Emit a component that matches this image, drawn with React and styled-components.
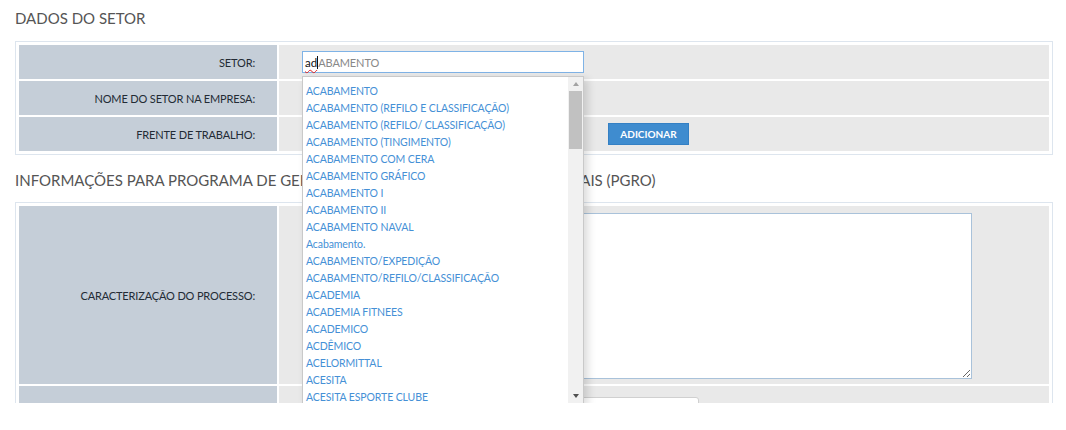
import React from "react";
import styled, { createGlobalStyle } from "styled-components";

const GlobalStyle = createGlobalStyle`
  html, body {
    margin: 0;
    padding: 0;
    background: #fff;
    font-family: "Lato", "Liberation Sans", sans-serif;
  }
  * { box-sizing: border-box; }
`;

const Viewport = styled.div`
  height: 403px;
  overflow: hidden;
  padding: 0 13px 0 15px;
`;

const Heading = styled.h2`
  margin: ${(p) => (p.$first ? "0 0 13px" : "15px 0 12px")};
  padding-top: ${(p) => (p.$first ? "8px" : "0")};
  font-size: 15px;
  line-height: 20px;
  font-weight: 400;
  color: #555;
  text-transform: uppercase;
  white-space: nowrap;
`;

const Panel = styled.div`
  width: 1038px;
  border: 1px solid #dde5ee;
  padding: 3px;
  display: grid;
  grid-template-columns: 258px 1fr;
  gap: 2px;
`;

const Label = styled.div`
  background: #c5ced8;
  min-height: ${(p) => p.$h || 34}px;
  display: flex;
  align-items: center;
  justify-content: flex-end;
  padding-right: 22px;
  font-size: 11px;
  letter-spacing: -0.15px;
  color: #232b35;
  text-transform: uppercase;
`;

const Value = styled.div`
  background: #e9e9e9;
  min-height: ${(p) => p.$h || 34}px;
  display: flex;
  align-items: ${(p) => (p.$top ? "flex-start" : "center")};
  padding: ${(p) => (p.$top ? "7px 0 5px 23px" : "0 0 0 23px")};
`;

const Field = styled.div`
  position: relative;
`;

const Input = styled.div`
  width: ${(p) => p.$w || 282}px;
  height: ${(p) => p.$h || 22}px;
  margin-top: ${(p) => p.$mt || 0}px;
  background: #fff;
  border: 1px solid ${(p) => (p.$focus ? "#7fb3e6" : "#d0d0d0")};
  border-radius: ${(p) => (p.$round ? "3px" : "0")};
  display: flex;
  align-items: center;
  padding-left: 2px;
  font-size: 11px;
`;

const Typed = styled.span`
  color: #111;
  font-size: 11.5px;
  text-decoration: underline wavy #e02020;
  text-underline-offset: 2px;
  text-decoration-thickness: 1px;
  border-right: 1px solid #111;
`;

const Ghost = styled.span`
  color: #888;
  letter-spacing: -0.1px;
`;

const Spacer = styled.div`
  width: ${(p) => p.$w}px;
  flex: none;
`;

const Button = styled.button`
  height: 22px;
  width: 81px;
  border: 1px solid #3480c4;
  background: #3f8ccf;
  color: #fff;
  font-family: inherit;
  font-size: 10px;
  font-weight: 700;
  text-transform: uppercase;
  padding: 0;
`;

const Textarea = styled.textarea`
  width: 670px;
  height: 166px;
  border: 1px solid #a9c2da;
  background: #fff;
  resize: both;
  font-family: inherit;
`;

const Dropdown = styled.div`
  position: absolute;
  top: calc(100% + 3px);
  left: 0;
  width: 282px;
  height: 328px;
  background: #fff;
  border: 1px solid #c9c9c9;
  box-shadow: 4px 3px 8px rgba(0, 0, 0, 0.14);
  display: flex;
  z-index: 10;
`;

const List = styled.ul`
  flex: 1;
  margin: 0;
  padding: 6px 0 0 3px;
  list-style: none;
  overflow: hidden;
`;

const Item = styled.li`
  font-size: 10.5px;
  letter-spacing: -0.1px;
  line-height: 17px;
  height: 17px;
  color: #4590d6;
  white-space: nowrap;
`;

const Scrollbar = styled.div`
  width: 15px;
  background: #f1f1f1;
  display: flex;
  flex-direction: column;
  align-items: center;
`;

const Arrow = styled.div`
  height: 14px;
  width: 15px;
  display: flex;
  align-items: center;
  justify-content: center;
  &::before {
    content: "";
    border-left: 3.5px solid transparent;
    border-right: 3.5px solid transparent;
    ${(p) =>
      p.$down
        ? "border-top: 4px solid #505050;"
        : "border-bottom: 4px solid #a3a3a3;"}
  }
`;

const Track = styled.div`
  flex: 1;
  width: 100%;
  display: flex;
  justify-content: center;
`;

const Thumb = styled.div`
  width: 13px;
  height: 58px;
  background: #c1c1c1;
`;

const items = [
  "ACABAMENTO",
  "ACABAMENTO (REFILO E CLASSIFICAÇÃO)",
  "ACABAMENTO (REFILO/ CLASSIFICAÇÃO)",
  "ACABAMENTO (TINGIMENTO)",
  "ACABAMENTO COM CERA",
  "ACABAMENTO GRÁFICO",
  "ACABAMENTO I",
  "ACABAMENTO II",
  "ACABAMENTO NAVAL",
  "Acabamento.",
  "ACABAMENTO/EXPEDIÇÃO",
  "ACABAMENTO/REFILO/CLASSIFICAÇÃO",
  "ACADEMIA",
  "ACADEMIA FITNEES",
  "ACADEMICO",
  "ACDÊMICO",
  "ACELORMITTAL",
  "ACESITA",
  "ACESITA ESPORTE CLUBE",
];

const App = () => (
  <>
    <GlobalStyle />
    <Viewport>
      <Heading $first>Dados do Setor</Heading>
      <Panel>
        <Label>Setor:</Label>
        <Value>
          <Field>
            <Input $focus>
              <Typed>ad</Typed>
              <Ghost>ABAMENTO</Ghost>
            </Input>
            <Dropdown>
              <List>
                {items.map((it) => (
                  <Item key={it}>{it}</Item>
                ))}
              </List>
              <Scrollbar>
                <Arrow />
                <Track>
                  <Thumb />
                </Track>
                <Arrow $down />
              </Scrollbar>
            </Dropdown>
          </Field>
        </Value>
        <Label>Nome do setor na empresa:</Label>
        <Value>
          <Input />
        </Value>
        <Label>Frente de trabalho:</Label>
        <Value>
          <Spacer $w={306} />
          <Button>Adicionar</Button>
        </Value>
      </Panel>
      <Heading>
        Informações para Programa de Gerenciamento de Riscos Ocupacionais (PGRO)
      </Heading>
      <Panel>
        <Label $h={177}>Caracterização do processo:</Label>
        <Value $h={177} $top>
          <Textarea />
        </Value>
        <Label $h={40}></Label>
        <Value $h={40} $top>
          <Input $w={397} $h={30} $mt={4} $round />
        </Value>
      </Panel>
    </Viewport>
  </>
);

export default App;
